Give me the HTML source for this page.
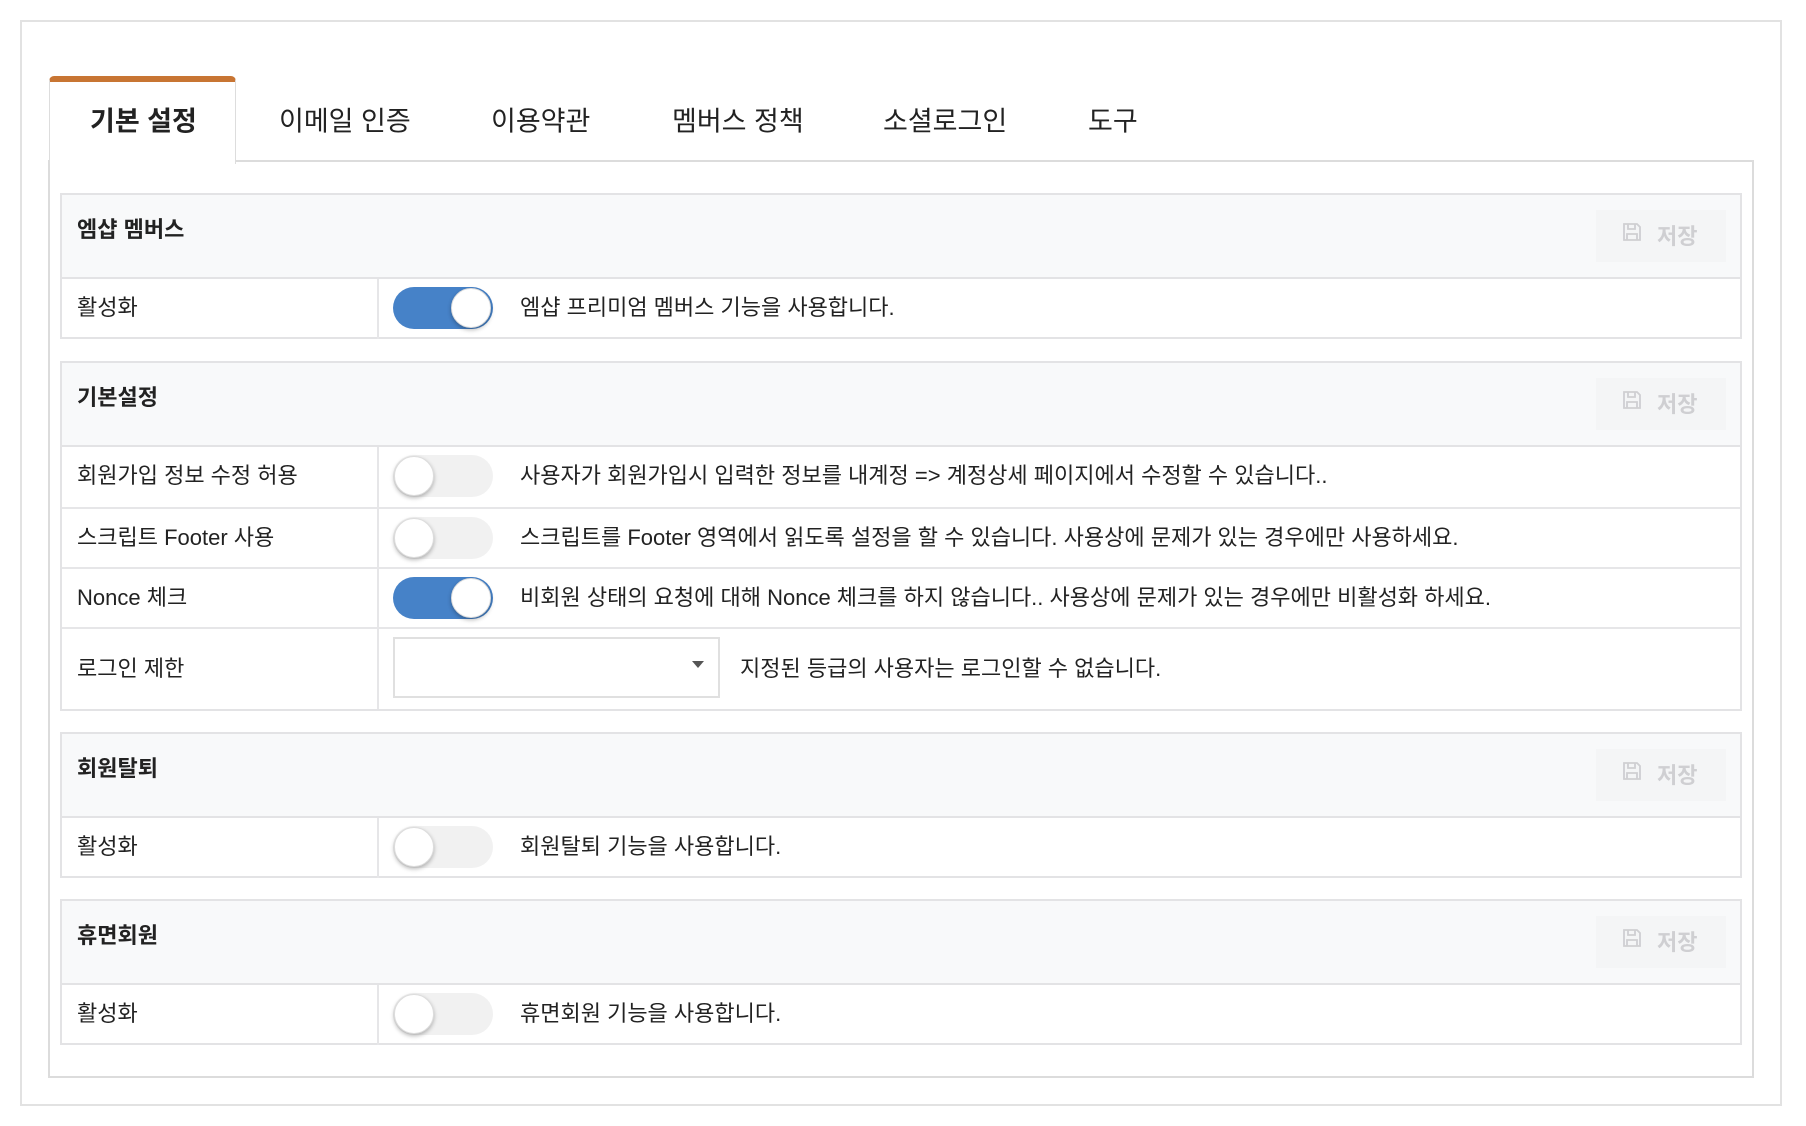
<!DOCTYPE html>
<html><head><meta charset="utf-8"><style>
*{box-sizing:border-box;margin:0;padding:0}
body{width:1806px;height:1126px;background:#fff;font-family:"Liberation Sans","Noto Sans CJK KR",sans-serif;color:#222;position:relative;overflow:hidden}
.abs{position:absolute}
.outer{left:20px;top:20px;width:1762px;height:1086px;border:2px solid #e2e2e2}
.panel{left:48px;top:160px;width:1706px;height:918px;border:2px solid #dcdcdc}
.tab{position:absolute;top:119px;font-size:27px;transform:translateY(-50%);white-space:nowrap;color:#222}
.activetab{left:49px;top:76px;width:187px;height:88px;background:#fff;border:1px solid #ddd;border-bottom:none;border-top:6px solid #c87533;border-radius:5px 5px 0 0}
.sec{position:absolute;left:60px;width:1682px;border:2px solid #e3e3e5;background:#fff}
.hdr{height:84px;background:#f8f9fa;border-bottom:2px solid #e3e3e5;position:relative}
.hdr .t{position:absolute;left:15px;top:24px;font-size:22px;font-weight:bold;line-height:1}
.save{position:absolute;right:14px;top:15px;width:130px;height:52px;background:#f4f5f6;color:#cfcfd2;font-weight:bold;font-size:22px}
.save svg{position:absolute;left:26px;top:12px}
.save span{position:absolute;left:61px;top:9px}
.row{height:60px;border-top:2px solid #e6e6e8;position:relative;font-size:22px}
.row .l{position:absolute;left:15px;top:0;width:302px;height:100%;border-right:2px solid #e6e6e8;line-height:58px}
.row .d{position:absolute;left:458px;top:0;line-height:58px;white-space:nowrap}
.tg{position:absolute;left:331px;top:8px;width:100px;height:42px;border-radius:21px;background:#f1f1f1}
.tg.on{background:#4682c8}
.tg i{position:absolute;top:1px;left:1px;width:40px;height:40px;border-radius:50%;background:#fff;box-shadow:0 2px 4px rgba(0,0,0,.28);border:1px solid #ddd}
.tg.on i{left:58px}
</style></head><body>
<div class="abs outer"></div>
<div class="abs panel"></div>
<div class="abs activetab"></div>
<div class="tab" style="left:90px;font-weight:bold">기본 설정</div>
<div class="tab" style="left:279px">이메일 인증</div>
<div class="tab" style="left:491px">이용약관</div>
<div class="tab" style="left:672px">멤버스 정책</div>
<div class="tab" style="left:883px">소셜로그인</div>
<div class="tab" style="left:1088px">도구</div>

<svg width="0" height="0" style="position:absolute"><defs><symbol id="fd" viewBox="0 0 20 20"><path d="M2 2h13l3 3v13H2z M6 2v5h7V2 M5 18v-6h10v6" fill="none" stroke="#cfcfd2" stroke-width="1.8"/></symbol></defs></svg>

<div class="sec" style="top:193px;height:146px">
 <div class="hdr"><div class="t">엠샵 멤버스</div><div class="save"><svg width="20" height="20"><use href="#fd"/></svg><span>저장</span></div></div>
 <div class="row" style="border-top:none"><div class="l">활성화</div><div class="tg on"><i></i></div><div class="d">엠샵 프리미엄 멤버스 기능을 사용합니다.</div></div>
</div>

<div class="sec" style="top:361px;height:350px">
 <div class="hdr"><div class="t">기본설정</div><div class="save"><svg width="20" height="20"><use href="#fd"/></svg><span>저장</span></div></div>
 <div class="row" style="border-top:none"><div class="l">회원가입 정보 수정 허용</div><div class="tg"><i></i></div><div class="d">사용자가 회원가입시 입력한 정보를 내계정 =&gt; 계정상세 페이지에서 수정할 수 있습니다..</div></div>
 <div class="row"><div class="l">스크립트 Footer 사용</div><div class="tg"><i></i></div><div class="d">스크립트를 Footer 영역에서 읽도록 설정을 할 수 있습니다. 사용상에 문제가 있는 경우에만 사용하세요.</div></div>
 <div class="row"><div class="l">Nonce 체크</div><div class="tg on"><i></i></div><div class="d">비회원 상태의 요청에 대해 Nonce 체크를 하지 않습니다.. 사용상에 문제가 있는 경우에만 비활성화 하세요.</div></div>
 <div class="row" style="height:82px"><div class="l" style="line-height:80px">로그인 제한</div>
  <div class="abs" style="left:331px;top:8px;width:327px;height:61px;border:2px solid #e0e0e0;background:#fff"><div class="abs" style="right:14px;top:22px;width:0;height:0;border-left:6px solid transparent;border-right:6px solid transparent;border-top:7px solid #555"></div></div>
  <div class="d" style="left:678px;line-height:80px">지정된 등급의 사용자는 로그인할 수 없습니다.</div></div>
</div>

<div class="sec" style="top:732px;height:146px">
 <div class="hdr"><div class="t">회원탈퇴</div><div class="save"><svg width="20" height="20"><use href="#fd"/></svg><span>저장</span></div></div>
 <div class="row" style="border-top:none"><div class="l">활성화</div><div class="tg"><i></i></div><div class="d">회원탈퇴 기능을 사용합니다.</div></div>
</div>

<div class="sec" style="top:899px;height:146px">
 <div class="hdr"><div class="t">휴면회원</div><div class="save"><svg width="20" height="20"><use href="#fd"/></svg><span>저장</span></div></div>
 <div class="row" style="border-top:none"><div class="l">활성화</div><div class="tg"><i></i></div><div class="d">휴면회원 기능을 사용합니다.</div></div>
</div>
</body></html>
